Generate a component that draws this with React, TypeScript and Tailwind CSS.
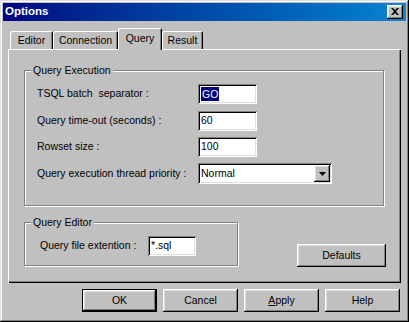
import React from "react";

const raised =
  "shadow-[inset_-1px_-1px_0_#000,inset_1px_1px_0_#fff,inset_-2px_-2px_0_#808080,inset_2px_2px_0_#dfdfdf]";
const sunken =
  "shadow-[inset_1px_1px_0_#808080,inset_-1px_-1px_0_#fff,inset_2px_2px_0_#000,inset_-2px_-2px_0_#dfdfdf]";

function Btn({ children, def = false, w = "w-[75px]" }: { children: React.ReactNode; def?: boolean; w?: string }) {
  return (
    <div
      className={`${w} h-[23px] flex items-center justify-center bg-[#c0c0c0] ${
        def
          ? "shadow-[inset_0_0_0_1px_#000,inset_-2px_-2px_0_#000,inset_2px_2px_0_#fff,inset_-3px_-3px_0_#808080,inset_3px_3px_0_#dfdfdf]"
          : raised
      }`}
    >
      {children}
    </div>
  );
}

function Input({ w, children }: { w: string; children?: React.ReactNode }) {
  return (
    <div className={`${w} h-[20px] bg-white ${sunken} flex items-center pl-[3px]`}>{children}</div>
  );
}

function Group({ title, className, children }: { title: string; className: string; children: React.ReactNode }) {
  return (
    <div
      className={`relative border border-[#808080] shadow-[1px_1px_0_#fff,inset_1px_1px_0_#fff] ${className}`}
    >
      <span className="absolute -top-[8px] left-[6px] bg-[#c0c0c0] px-[2px] leading-[14px]">{title}</span>
      {children}
    </div>
  );
}

export default function App() {
  return (
    <div
      className="w-[409px] h-[322px] bg-[#c0c0c0] p-[3px] flex flex-col text-[10.5px] text-black shadow-[inset_-1px_-1px_0_#000,inset_1px_1px_0_#dfdfdf,inset_-2px_-2px_0_#808080,inset_2px_2px_0_#fff]"
      style={{ fontFamily: '"Liberation Sans", Arial, sans-serif' }}
    >
      {/* Title bar */}
      <div className="h-[18px] flex items-center justify-between bg-gradient-to-r from-[#000080] to-[#1084d0] pl-[2px] pr-[3px]">
        <span className="text-white font-bold text-[11.5px] leading-none">Options</span>
        <div className={`w-[16px] h-[14px] bg-[#c0c0c0] ${raised} flex items-center justify-center`}>
          <svg width="8" height="7" viewBox="0 0 8 7" className="-mt-px">
            <path d="M0 0h2l2 2 2-2h2L5 3.5 8 7H6L4 5 2 7H0l3-3.5z" fill="#000" />
          </svg>
        </div>
      </div>

      {/* Tabs */}
      <div className="mt-[7px] ml-[5px] w-[393px] flex flex-col">
        <div className="h-[21px] flex items-end pl-[2px]">
          <div className="w-[43px] h-[18px] flex items-center justify-center rounded-t-[2px] shadow-[inset_1px_1px_0_#fff,inset_-1px_0_0_#000,inset_-2px_0_0_#808080] pt-[1px]">
            Editor
          </div>
          <div className="w-[65px] h-[18px] flex items-center justify-center rounded-t-[2px] shadow-[inset_1px_1px_0_#fff,inset_-1px_0_0_#000,inset_-2px_0_0_#808080] pt-[1px]">
            Connection
          </div>
          <div className="relative z-10 w-[44px] h-[22px] -mb-px bg-[#c0c0c0] flex items-start justify-center pt-[3px] rounded-t-[2px] shadow-[inset_1px_1px_0_#fff,inset_-1px_0_0_#000,inset_-2px_0_0_#808080]">
            Query
          </div>
          <div className="w-[41px] h-[18px] flex items-center justify-center rounded-t-[2px] shadow-[inset_1px_1px_0_#fff,inset_-1px_0_0_#000,inset_-2px_0_0_#808080] pt-[1px]">
            Result
          </div>
        </div>

        {/* Panel */}
        <div className="h-[234px] pl-[16px] pt-[21px] shadow-[inset_1px_1px_0_#fff,inset_-1px_-1px_0_#000,inset_-2px_-2px_0_#808080]">
          <Group title="Query Execution" className="w-[360px] h-[136px] pl-[12px] pt-[13px]">
            <div className="flex items-center h-[20px]">
              <span className="w-[161px]">TSQL batch&nbsp; separator :</span>
              <Input w="w-[59px]">
                <span className="bg-[#000080] text-white px-[1px] leading-[14px]">GO</span>
              </Input>
            </div>
            <div className="flex items-center h-[20px] mt-[7px]">
              <span className="w-[161px]">Query time-out (seconds) :</span>
              <Input w="w-[59px]">60</Input>
            </div>
            <div className="flex items-center h-[20px] mt-[6px]">
              <span className="w-[161px]">Rowset size :</span>
              <Input w="w-[59px]">100</Input>
            </div>
            <div className="flex items-center h-[21px] mt-[6px]">
              <span className="w-[161px]">Query execution thread priority :</span>
              <div className={`w-[134px] h-[21px] bg-white ${sunken} flex items-center justify-between pl-[3px] pr-[2px]`}>
                <span>Normal</span>
                <div className={`w-[16px] h-[17px] bg-[#c0c0c0] ${raised} flex items-center justify-center`}>
                  <svg width="7" height="4" viewBox="0 0 7 4">
                    <path d="M0 0h7L3.5 4z" fill="#000" />
                  </svg>
                </div>
              </div>
            </div>
          </Group>

          <div className="flex mt-[16px]">
            <Group title="Query Editor" className="w-[214px] h-[44px] pl-[15px] pt-[13px]">
              <div className="flex items-center h-[19px]">
                <span className="w-[108px]">Query file extention :</span>
                <Input w="w-[48px]">*.sql</Input>
              </div>
            </Group>
            <div className="ml-[59px] mt-[22px]">
              <Btn w="w-[89px]">Defaults</Btn>
            </div>
          </div>
        </div>
      </div>

      {/* Bottom buttons */}
      <div className="mt-[6px] flex justify-end gap-[6px] pr-[6px]">
        <Btn def>OK</Btn>
        <Btn>Cancel</Btn>
        <Btn>
          <span>
            <span className="underline">A</span>pply
          </span>
        </Btn>
        <Btn>Help</Btn>
      </div>
    </div>
  );
}
